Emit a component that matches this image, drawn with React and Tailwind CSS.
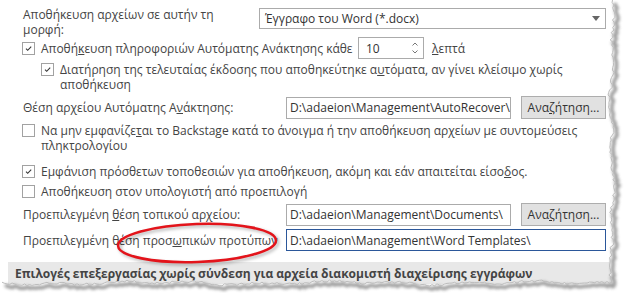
import React from 'react';

function Check({ checked }) {
  return (
    <span className="w-[13px] h-[13px] border border-[#a2a2a2] bg-white flex items-center justify-center shrink-0">
      {checked && (
        <svg width="9" height="9" viewBox="0 0 9 9">
          <path d="M2 4.7 L3.7 6.3 L7.2 2.6" stroke="#333" strokeWidth="1.1" fill="none" />
        </svg>
      )}
    </span>
  );
}

function TextBox({ value, focused, className }) {
  return (
    <div
      className={
        'h-[22px] bg-white flex items-center pl-[3px] text-[#333] whitespace-nowrap overflow-hidden border ' +
        (focused ? 'border-[#2b579a]' : 'border-[#ababab]') +
        ' ' +
        className
      }
    >
      {value}
    </div>
  );
}

function BrowseButton() {
  return (
    <button className="ml-[10px] w-[85px] h-[23px] bg-[#e1e1e1] border border-[#adadad] text-[#333] flex items-center justify-center">
      Ανα<u>ζ</u>ήτηση...
    </button>
  );
}

function rng(seed) {
  let s = seed;
  return () => {
    s = (s * 1103515245 + 12345) % 2147483648;
    return s / 2147483648;
  };
}

function TornEdge() {
  const r = rng(11);
  const right = [];
  for (let y = 0; y <= 283; y += 2.5) {
    const wave = Math.sin(y / 9) * 1.3 + Math.sin(y / 23) * 1.2;
    right.push([612 + wave + (r() - 0.5) * 3.5, y]);
  }
  const bottom = [];
  for (let x = 612; x >= 0; x -= 2.5) {
    const wave = Math.sin(x / 11) * 1 + Math.sin(x / 31) * 1;
    bottom.push([x, 283 + wave + (r() - 0.5) * 2.5]);
  }
  const pts = [...right, ...bottom];
  const line = pts.map((p, i) => (i ? 'L' : 'M') + p[0].toFixed(1) + ' ' + p[1].toFixed(1)).join(' ');
  const cover = 'M625 0 ' + pts.map((p) => 'L' + p[0].toFixed(1) + ' ' + p[1].toFixed(1)).join(' ') + ' L0 293 L625 293 Z';
  return (
    <svg className="absolute inset-0 pointer-events-none" width="625" height="293">
      <defs>
        <filter id="blur" x="-10%" y="-10%" width="120%" height="120%">
          <feGaussianBlur stdDeviation="1.8" />
        </filter>
      </defs>
      <path d={cover} fill="#fff" />
      <path d={line} transform="translate(3 3)" stroke="#7a7a7a" strokeWidth="3.5" fill="none" filter="url(#blur)" opacity="0.75" />
      <path d={line} stroke="#bdbdbd" strokeWidth="1" fill="none" />
    </svg>
  );
}

function RedEllipse() {
  return (
    <svg className="absolute left-0 top-0 pointer-events-none" width="625" height="293">
      <defs>
        <filter id="sh" x="-20%" y="-50%" width="140%" height="200%">
          <feGaussianBlur stdDeviation="1.5" />
        </filter>
      </defs>
      <ellipse cx="199" cy="245" rx="79" ry="19" transform="rotate(-2 199 245)" stroke="#000" strokeOpacity="0.25" strokeWidth="3" fill="none" filter="url(#sh)" />
      <ellipse cx="197" cy="243" rx="79" ry="19" transform="rotate(-2 197 243)" stroke="#e3141b" strokeWidth="2.6" fill="none" />
    </svg>
  );
}

export default function App() {
  return (
    <div className="relative w-[625px] h-[293px] overflow-hidden bg-white text-[12px] text-[#444] font-['Open_Sans','Noto_Sans',sans-serif] leading-[15px]">
      <div className="pl-[23px] pr-[19px] pt-[7px]">
        {/* save format */}
        <div className="flex">
          <div className="w-[236px]">
            Αποθήκευση αρχείων σε αυτήν τη<br />μορφή:
          </div>
          <div className="flex-1 h-[21px] mt-[1px] border border-[#ababab] flex items-center justify-between pl-[5px] pr-[5px] text-[#333]">
            <span>Έγγραφο του Word (*.docx)</span>
            <svg width="8" height="5" viewBox="0 0 8 5">
              <path d="M0 0 L8 0 L4 5 Z" fill="#666" />
            </svg>
          </div>
        </div>

        {/* autorecover */}
        <div className="flex items-center h-[22px] -ml-px">
          <Check checked />
          <span className="ml-[6px] w-[317px] whitespace-nowrap">
            Αποθή<u>κ</u>ευση πληροφοριών Αυτόματης Ανάκτησης κάθε
          </span>
          <div className="w-[66px] h-[22px] border border-[#ababab] flex items-center justify-between pl-[7px] pr-[4px] text-[#333]">
            <span>10</span>
            <svg width="8" height="14" viewBox="0 0 8 14">
              <path d="M1.5 4.5 L4 2 L6.5 4.5" stroke="#777" strokeWidth="1" fill="none" />
              <path d="M1.5 9.5 L4 12 L6.5 9.5" stroke="#777" strokeWidth="1" fill="none" />
            </svg>
          </div>
          <span className="ml-[8px]">
            <u>λ</u>επτά
          </span>
        </div>

        <div className="flex items-start mt-[3px] pl-[18px]">
          <span className="mt-[1px]">
            <Check checked />
          </span>
          <span className="ml-[6px]">
            Διατήρηση της τελευταίας έκδοσης που αποθηκεύτηκε α<u>υ</u>τόματα, αν γίνει κλείσιμο χωρίς
            <br />
            αποθήκευση
          </span>
        </div>

        {/* autorecover location */}
        <div className="flex items-center h-[23px] mt-[4px]">
          <span className="w-[263px]">
            Θέση αρχείου Αυτόματης Α<u>ν</u>άκτησης:
          </span>
          <TextBox value="D:\adaeion\Management\AutoRecover\" className="w-[225px]" />
          <BrowseButton />
        </div>

        <div className="flex items-start mt-[4px] -ml-px">
          <span className="mt-[1px]">
            <Check />
          </span>
          <span className="ml-[6px]">
            Να μην εμφανίζε<u>τ</u>αι το Backstage κατά το άνοιγμα ή την αποθήκευση αρχείων με συντομεύσεις
            <br />
            πληκτρολογίου
          </span>
        </div>

        <div className="flex items-center h-[15px] mt-[11px] -ml-px">
          <Check checked />
          <span className="ml-[6px]">
            Εμφάνιση πρόσθετων τοποθεσιών για αποθήκευση, ακόμη και εάν απαιτείται είσο<u>δ</u>ος.
          </span>
        </div>

        <div className="flex items-center h-[15px] mt-[5px] -ml-px">
          <Check />
          <span className="ml-[6px]">Αποθήκευση στον υπολογιστή από προεπιλογή</span>
        </div>

        {/* default locations */}
        <div className="flex items-center h-[23px] mt-[4px]">
          <span className="w-[263px]">
            Προεπιλεγμένη <u>θ</u>έση τοπικού αρχείου:
          </span>
          <TextBox value="D:\adaeion\Management\Documents\" className="w-[225px]" />
          <BrowseButton />
        </div>

        <div className="flex items-center h-[22px] mt-[3px]">
          <span className="w-[263px]">
            Προεπιλεγμένη θέση προσ<u>ω</u>πικών προτύπων
          </span>
          <TextBox value="D:\adaeion\Management\Word Templates\" focused className="flex-1" />
        </div>
      </div>

      <div className="mt-[11px] ml-[8px] h-[22px] bg-[#e8e8e8] flex items-center pl-[7px] font-bold whitespace-nowrap">
        Επιλογές επεξεργασίας χωρίς σύνδεση για αρχεία διακομιστή διαχείρισης εγγράφων
      </div>

      <TornEdge />
      <RedEllipse />
    </div>
  );
}
